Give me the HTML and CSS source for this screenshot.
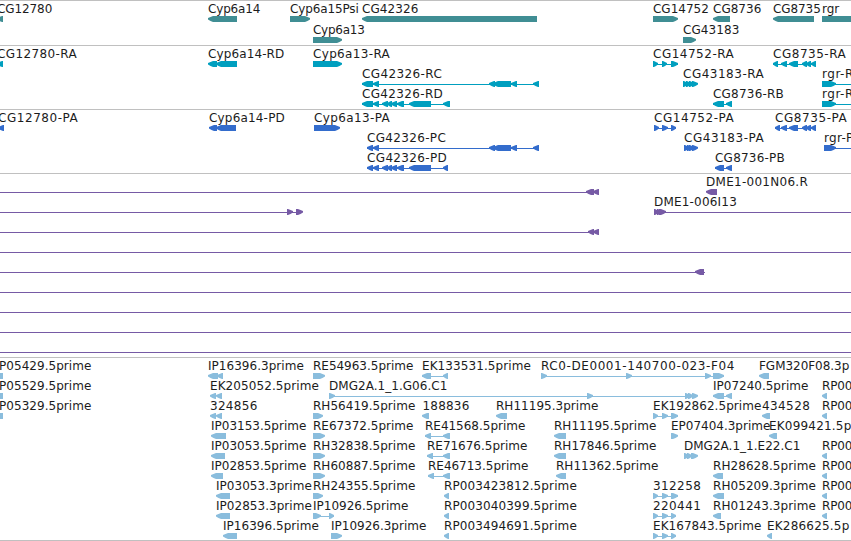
FILE: index.html
```html
<!DOCTYPE html>
<html lang="en">
<head>
<meta charset="utf-8">
<title>Genome region</title>
<link rel="stylesheet" href="styles.css">
</head>
<body>
<main class="browser" id="browser"></main>
<script src="tracks.js"></script>
</body>
</html>
```
FILE: styles.css
```css
body {
  margin: 0;
  background: #fff;
  overflow: hidden;
}
.browser {
  display: flex;
  flex-direction: column;
  width: 851px;
  height: 540px;
  border-bottom: 1px solid #c0c0c0;
}
.track {
  display: flex;
  flex-direction: column;
  border-top: 1px solid #c0c0c0;
  padding-bottom: 3px;
}
.row {
  display: block;
  width: 851px;
  height: 20px;
  overflow: visible;
}
.genes { color: #408e94; padding-bottom: 2px; }
.genes .row { height: 21px; }
.transcripts { color: #009fbf; }
.proteins { color: #336ccc; }
.bacs { color: #765aa5; }
.ests { color: #8abddd; padding-bottom: 0; }
.label {
  font: 12px "DejaVu Sans", sans-serif;
  fill: #1c1c1c;
}
.glyph { fill: currentColor; }
.span { fill: currentColor; shape-rendering: crispEdges; }
```
FILE: tracks.js
```js
// Labels: [text, start, end]. Shapes: "-" intron line, "<" / ">" stranded exon, "#" plain block.
const tracks = [
  { name: "genes", rows: [
    { labels: [["CG12780", -3, 53], ["Cyp6a14", 208, 261], ["Cyp6a15Psi", 290, 359.5], ["CG42326", 362, 419], ["CG14752", 653, 709.5], ["CG8736", 713, 762], ["CG8735", 773, 821.5], ["rgr", 822, 840]],
      shapes: "<-3,3 <208,237 >290,310 <362,537 >653,678 <713,730 <773,814 #822,851" },
    { labels: [["Cyp6a13", 313, 365.5], ["CG43183", 683, 740]], shapes: ">313,342 >683,696" }
  ]},
  { name: "transcripts", rows: [
    { labels: [["CG12780-RA", -3, 77.5], ["Cyp6a14-RD", 208, 285], ["Cyp6a13-RA", 313, 390.5], ["CG14752-RA", 653, 734.5], ["CG8735-RA", 773, 846.5]],
      shapes: "<-3,3 <208,217 <216,237 >313,342 -653,678 >653,658 >662,667 >671,678 -773,816 <773,778 <781,787 <789,798 <802,807 <806,811 <811,816" },
    { labels: [["CG42326-RC", 362, 442.5], ["CG43183-RA", 683, 764.5], ["rgr-R", 822, 854]],
      shapes: "-362,539 <362,373 <373,379 <489,495 <493,511 <511,517 <533,539 >683,688 >686,691 >689,694 >692,698 -822,851 >822,836" },
    { labels: [["CG42326-RD", 362, 443.5], ["CG8736-RB", 713, 784.5], ["rgr-R", 822, 854]],
      shapes: "-362,449 <362,373 <373,379 <382,388 <387,392 <391,397 <397,404 <409,431 <443,450 -713,732 <713,724 <726,732 -822,851 >822,836" }
  ]},
  { name: "proteins", rows: [
    { labels: [["CG12780-PA", -2, 78.5], ["Cyp6a14-PD", 209, 285.5], ["Cyp6a13-PA", 314, 390.5], ["CG14752-PA", 654, 734.5], ["CG8735-PA", 775, 847.5]],
      shapes: "<-2,4 <209,217 <216,236 >314,340 -654,676 >654,659 >662,668 >671,676 -775,816 <775,780 <781,787 <789,798 <802,807 <806,811 <811,816" },
    { labels: [["CG42326-PC", 367, 446.5], ["CG43183-PA", 684, 764.5], ["rgr-P", 824, 854]],
      shapes: "-367,539 <367,373 <373,379 <489,495 <493,511 <511,517 <533,539 >684,689 >687,692 >689,694 >692,698 -824,851 >824,836" },
    { labels: [["CG42326-PD", 367, 447.5], ["CG8736-PB", 715, 785.5]],
      shapes: "-367,448 <367,373 <373,379 <382,388 <387,392 <391,397 <397,404 <409,431 <443,448 -715,732 <715,724 <726,732" }
  ]},
  { name: "bacs", rows: [
    { labels: [["DME1-001N06.R", 706, 808.5]], shapes: "-0,599 <586,594 <593,599 <706,717" },
    { labels: [["DME1-006I13", 654, 737.5]], shapes: "-0,302 >287,293 >296,303 -654,851 >654,659 >657,662 >659,666" },
    { labels: [], shapes: "-0,599 <588,594 <593,599" },
    { labels: [], shapes: "-0,851" },
    { labels: [], shapes: "-0,705 <695,704" },
    { labels: [], shapes: "-0,851" },
    { labels: [], shapes: "-0,851" },
    { labels: [], shapes: "-0,851" },
    { labels: [], shapes: "-0,851" }
  ]},
  { name: "ests", rows: [
    { labels: [["P05429.5prime", -1, 92], ["IP16396.3prime", 208, 304.5], ["RE54963.5prime", 313, 414], ["EK133531.5prime", 422, 531.5], ["RC0-DE0001-140700-023-F04", 541, 735], ["FGM320F08.3p", 759, 850]],
      shapes: "#0,3 <208,218 <217,223 >313,325 -422,448 <422,431 <443,448 -541,724 >541,547 >626,632 >705,711 >713,724 <759,769" },
    { labels: [["P05529.5prime", -1, 92], ["EK205052.5prime", 210, 319.5], ["DMG2A.1_1.G06.C1", 329, 448], ["IP07240.5prime", 713, 809], ["RP00", 822, 853]],
      shapes: "#0,3 <210,216 <216,222 -329,697 >329,335 >587,593 >685,690 >688,693 >692,698 -713,732 <713,724 <726,732 <822,827" },
    { labels: [["P05329.5prime", -1, 92], ["324856", 210, 258], ["RH56419.5prime", 313, 416], ["188836", 422.5, 470], ["RH11195.3prime", 496, 599], ["EK192862.5prime", 653, 762], ["434528", 762, 810.5], ["RP00", 822, 853]],
      shapes: "#0,3 <210,216 <216,222 >313,323 <422,429 <496,507 -653,678 >653,658 >662,668 >671,678 <762,770 <822,827" },
    { labels: [["IP03153.5prime", 211, 307], ["RE67372.5prime", 313, 414], ["RE41568.5prime", 425, 526], ["RH11195.5prime", 554, 657], ["EP07404.3prime", 671, 771], ["EK099421.5p", 769, 852]],
      shapes: "<211,226 >313,325 -425,450 <425,431 <443,450 <554,566 >671,678 <769,777" },
    { labels: [["IP03053.5prime", 211, 307], ["RH32838.5prime", 313, 416], ["RE71676.5prime", 427, 528], ["RH17846.5prime", 554, 657], ["DMG2A.1_1.E22.C1", 684, 801], ["RP00", 822, 853]],
      shapes: "<211,225 >313,325 -427,450 <427,433 <443,450 <554,566 >684,689 >687,692 >691,698 <822,827" },
    { labels: [["IP02853.5prime", 211, 307], ["RH60887.5prime", 313, 416], ["RE46713.5prime", 428, 529], ["RH11362.5prime", 556, 659], ["RH28628.5prime", 713, 816.5], ["RP00", 822, 853]],
      shapes: "<211,223 >313,325 -428,450 <428,434 <443,450 <556,566 <713,723 <822,827" },
    { labels: [["IP03053.3prime", 216, 312.5], ["RH24355.5prime", 313, 416], ["RP003423812.5prime", 444, 577.5], ["312258", 653, 701.5], ["RH05209.3prime", 713, 816.5], ["RP00", 822, 853]],
      shapes: "<216,230 >313,323 <444,449 -653,678 >653,658 >662,668 >671,678 <713,724 <822,827" },
    { labels: [["IP02853.3prime", 216, 312.5], ["IP10926.5prime", 313, 409], ["RP003040399.5prime", 444, 577.5], ["220441", 653, 701.5], ["RH01243.3prime", 713, 816.5], ["RP00", 822, 853]],
      shapes: "<216,230 -313,334 >313,321 >329,334 <444,449 -653,676 >653,658 >662,668 >671,676 <713,721 <822,827" },
    { labels: [["IP16396.5prime", 223, 319.5], ["IP10926.3prime", 331, 427], ["RP003494691.5prime", 444, 577.5], ["EK167843.5prime", 653, 762], ["EK286625.5p", 767, 850]],
      shapes: "<223,237 >331,342 <444,449 -653,676 >653,658 >662,668 >671,676 <767,772" }
  ]}
];

const NS = "http://www.w3.org/2000/svg";
function node(parent, tag, attrs) {
  const el = document.createElementNS(NS, tag);
  for (const key in attrs) el.setAttribute(key, attrs[key]);
  parent.appendChild(el);
  return el;
}

function drawShape(svg, token) {
  const kind = token[0];
  const [a, b] = token.slice(1).split(",").map(Number);
  if (kind === "-") {
    node(svg, "rect", { class: "span", x: a, y: 18, width: b - a, height: 1 });
  } else if (kind === "#") {
    node(svg, "rect", { class: "span", x: a, y: 15, width: b - a, height: 6 });
  } else {
    const head = Math.min(5, b - a - 1);
    const left = kind === "<";
    const tip = left ? a : b;
    const back = left ? b : a;
    const neck = left ? a + head : b - head;
    const mid = (tip + neck) / 2;
    node(svg, "polygon", { class: "glyph",
      points: `${tip},17 ${mid},16 ${neck},15 ${back},15 ${back},21 ${neck},21 ${mid},20 ${tip},18.5` });
  }
}

const browser = document.getElementById("browser");
for (const track of tracks) {
  const section = document.createElement("section");
  section.className = "track " + track.name;
  for (const row of track.rows) {
    const svg = node(section, "svg", { class: "row" });
    row.shapes.split(" ").forEach(token => drawShape(svg, token));
    for (const [text, start, end] of row.labels) {
      node(svg, "text", { class: "label", x: start, y: 12, textLength: end - start - 0.7 }).textContent = text;
    }
  }
  browser.appendChild(section);
}
```
